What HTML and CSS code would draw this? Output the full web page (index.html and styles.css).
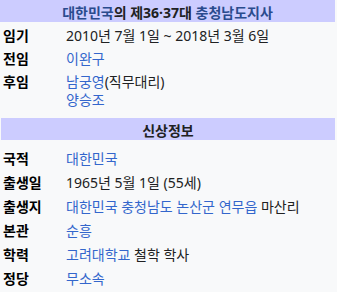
FILE: index.html
```html
<!DOCTYPE html>
<html lang="ko">
<head>
<meta charset="utf-8">
<link rel="stylesheet" href="styles.css">
</head>
<body>
<div class="infobox">
  <div class="head"><a>대한민국</a>의 제36·37대 <a>충청남도지사</a></div>
  <div class="section first">
    <div class="row"><div class="label">임기</div><div class="value">2010년 7월 1일 ~ 2018년 3월 6일</div></div>
    <div class="row"><div class="label">전임</div><div class="value"><a>이완구</a></div></div>
    <div class="row"><div class="label">후임</div><div class="value"><a>남궁영</a>(직무대리)<br><a>양승조</a></div></div>
  </div>
  <div class="head second">신상정보</div>
  <div class="section">
    <div class="row"><div class="label">국적</div><div class="value"><a>대한민국</a></div></div>
    <div class="row"><div class="label">출생일</div><div class="value">1965년 5월 1일 (55세)</div></div>
    <div class="row"><div class="label">출생지</div><div class="value"><a>대한민국</a> <a>충청남도</a> <a>논산군</a> <a>연무읍</a> 마산리</div></div>
    <div class="row"><div class="label">본관</div><div class="value"><a>순흥</a></div></div>
    <div class="row"><div class="label">학력</div><div class="value"><a>고려대학교</a> 철학 학사</div></div>
    <div class="row"><div class="label">정당</div><div class="value"><a>무소속</a></div></div>
  </div>
</div>
</body>
</html>
```
FILE: styles.css
```css
html, body {
  margin: 0;
  padding: 0;
  background: #f8f9fa;
}
.infobox {
  width: 335px;
  font-family: "Noto Sans", "Noto Sans CJK KR", sans-serif;
  font-size: 14px;
  color: #202122;
}
.head {
  background: #ccccff;
  text-align: center;
  font-weight: bold;
  height: 22px;
  box-sizing: border-box;
  padding-top: 3px;
  line-height: 19px;
  color: #202122;
}
.head.second {
  margin: 9px 0 0 1px;
}
.head a { color: #2a4b8d; }
a { color: #3366cc; text-decoration: none; }
.section {
  display: flex;
  flex-direction: column;
}
.section.first .row {
  padding-top: 5px;
  line-height: 18px;
}
.row {
  display: flex;
  padding: 5px 0 0 3px;
  line-height: 19px;
}
.section:not(.first) {
  padding-top: 4px;
}
.label {
  width: 63px;
  flex: none;
  font-weight: bold;
  color: #000;
}
.value { flex: 1; }
```
